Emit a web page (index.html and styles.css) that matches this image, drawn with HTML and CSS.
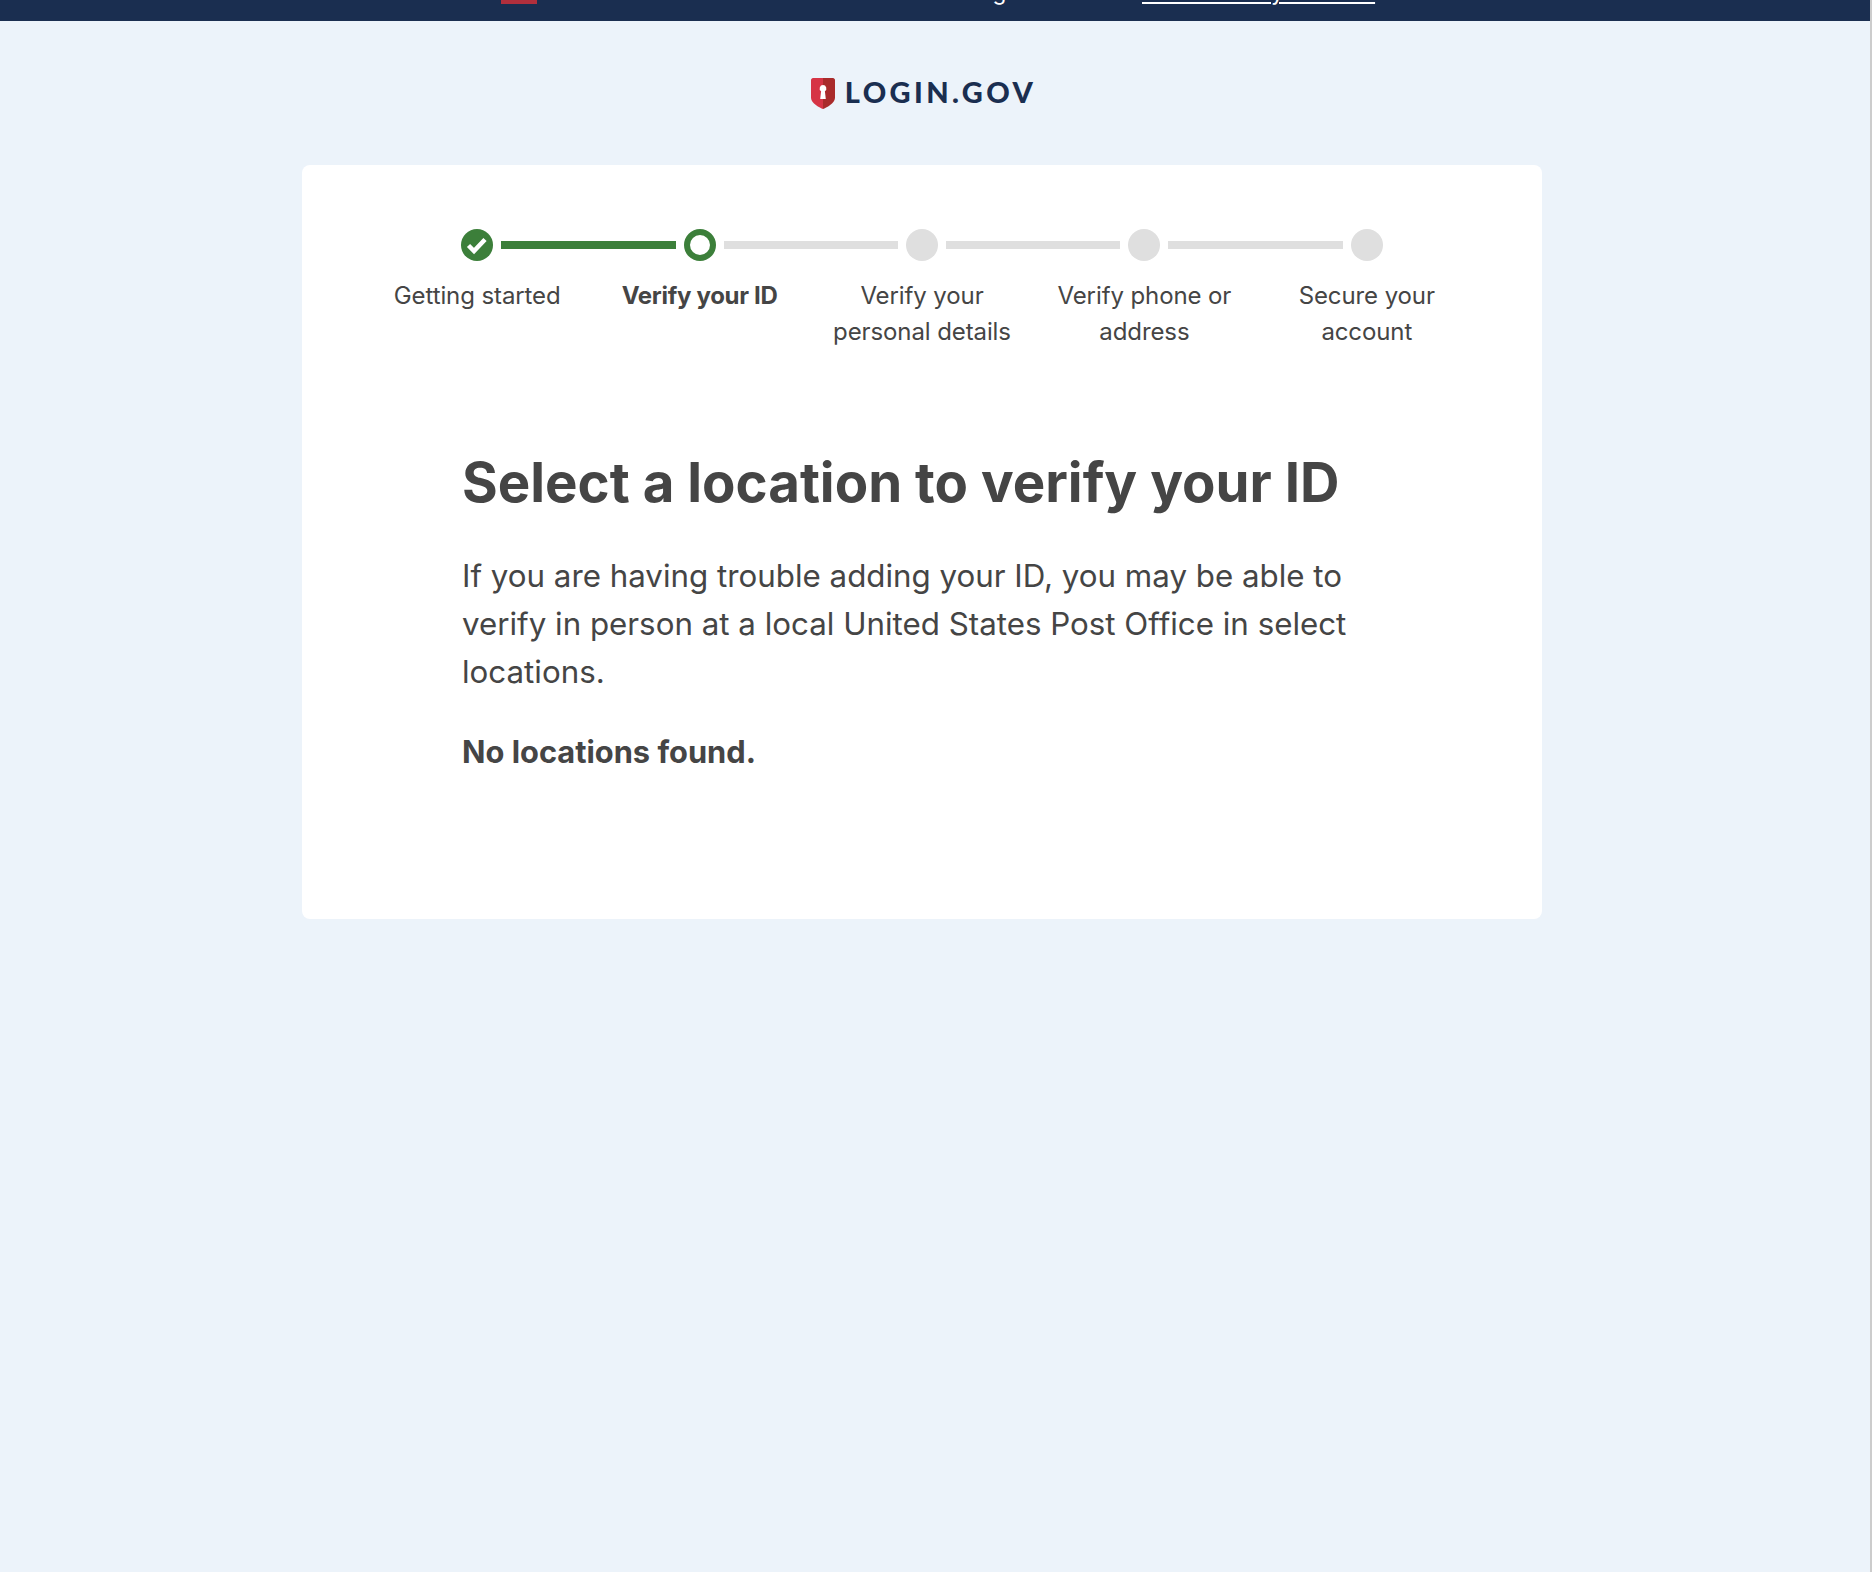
FILE: index.html
```html
<!DOCTYPE html>
<html lang="en">
<head>
  <meta charset="UTF-8">
  <title>Select a location to verify your ID - Login.gov</title>
  <link rel="stylesheet" href="styles.css">
</head>
<body>
  <div class="page">
    <div class="banner">
      <div class="banner-inner">
        <span class="flag"></span>
        <span class="banner-text">An official website of the United States government</span>
        <a class="banner-link" href="#">Here's how you know</a>
      </div>
    </div>

    <div class="logo">
      <svg class="logo-shield" viewBox="0 0 24 31" width="24" height="31" aria-hidden="true">
        <path d="M2 0h10v31C9 30 0 25 0 20V2C0 1 1 0 2 0z" fill="#d63445"/>
        <path d="M12 0h10c1 0 2 1 2 2v18c0 5-9 10-12 11z" fill="#a92b2b"/>
        <path d="M12 7a3.400 3.400 0 0 1 1.900 6.200l.9 7.800h-5.600l.9-7.800A3.400 3.400 0 0 1 12 7z" fill="#fff"/>
      </svg>
      <span class="logo-text">LOGIN.GOV</span>
    </div>

    <main class="card">
      <ol class="steps">
        <li class="step done">
          <span class="dot">
            <svg viewBox="0 0 32 32" width="32" height="32" aria-hidden="true">
              <path d="M7.500 16.500l5.500 5.500 11-11.500" fill="none" stroke="#fff" stroke-width="4.500"/>
            </svg>
          </span>
          <span class="step-label">Getting started</span>
        </li>
        <li class="step current">
          <span class="dot"></span>
          <span class="step-label">Verify your ID</span>
        </li>
        <li class="step">
          <span class="dot"></span>
          <span class="step-label">Verify your personal details</span>
        </li>
        <li class="step">
          <span class="dot"></span>
          <span class="step-label">Verify phone or address</span>
        </li>
        <li class="step">
          <span class="dot"></span>
          <span class="step-label">Secure your account</span>
        </li>
      </ol>

      <div class="content">
        <h1>Select a location to verify your ID</h1>
        <p class="lead">If you are having trouble adding your ID, you may be able to verify in person at a local United States Post Office in select locations.</p>
        <p class="empty">No locations found.</p>
      </div>
    </main>
  </div>
</body>
</html>
```
FILE: styles.css
```css
html, body {
  margin: 0;
  height: 100%;
  overflow: hidden;
}
body {
  background: #ccc;
  font-family: Inter, "Liberation Sans", sans-serif;
  color: #454545;
}
.page {
  width: 1870px;
  height: 1572px;
  background: #ecf3fa;
  overflow: hidden;
}

/* top banner, scrolled almost out of view */
.banner {
  height: 21px;
  background: #1a2e50;
  overflow: hidden;
}
.banner-inner {
  display: flex;
  align-items: flex-end;
  height: 4px;
  padding-left: 501px;
  color: #fff;
  font-size: 22.500px;
  line-height: 28px;
  white-space: nowrap;
}
.flag {
  width: 36px;
  height: 4px;
  background: #b12f3c;
  margin-right: 37px;
  flex: none;
}
.banner-text {
  width: 568px;
  flex: none;
  margin-bottom: -2px;
}
.banner-link {
  color: #fff;
  margin-bottom: -2px;
  flex: none;
  letter-spacing: 0.2px;
  text-underline-offset: 2px;
  text-decoration-thickness: 2px;
}

.logo {
  display: flex;
  align-items: center;
  justify-content: center;
  gap: 10px;
  width: 1847px;
  height: 31px;
  margin-top: 57px;
}
.logo-shield {
  flex: none;
}
.logo-text {
  font-family: Lato, sans-serif;
  font-weight: 900;
  font-size: 29px;
  line-height: 28px;
  letter-spacing: 3.400px;
  padding-bottom: 4px;
  color: #1a2e50;
}

.card {
  box-sizing: border-box;
  width: 1240px;
  height: 754px;
  margin: 56px 0 0 302px;
  padding: 64px 64px 0;
  background: #fff;
  border-radius: 8px;
}

.steps {
  display: grid;
  grid-template-columns: repeat(5, 1fr);
  margin: 0;
  padding: 0;
  list-style: none;
}
.step {
  position: relative;
  display: flex;
  flex-direction: column;
  align-items: center;
  text-align: center;
}
.step:not(:last-child)::after {
  content: "";
  position: absolute;
  top: 12px;
  left: calc(50% + 24px);
  width: calc(100% - 48px);
  height: 8px;
  background: #dfdfdf;
}
.step.done::after {
  background: #3c7f3a;
}
.dot {
  box-sizing: border-box;
  width: 32px;
  height: 32px;
  border-radius: 50%;
  background: #dfdfdf;
}
.dot svg {
  display: block;
}
.done .dot {
  background: #3c7f3a;
}
.current .dot {
  background: #fff;
  border: 6px solid #3c7f3a;
}
.step-label {
  margin-top: 17px;
  max-width: 190px;
  font-size: 24px;
  line-height: 36px;
  letter-spacing: -0.100px;
}
.current .step-label {
  font-weight: 700;
  letter-spacing: -0.300px;
}

.content {
  padding: 0 96px;
}
h1 {
  margin: 97px 0 0;
  font-size: 54.600px;
  line-height: 70px;
  font-weight: 700;
}
.lead {
  margin: 35px 0 0;
  font-size: 31.300px;
  line-height: 48px;
}
.empty {
  margin: 32px 0 0;
  font-size: 30.800px;
  line-height: 48px;
  font-weight: 700;
}
```
